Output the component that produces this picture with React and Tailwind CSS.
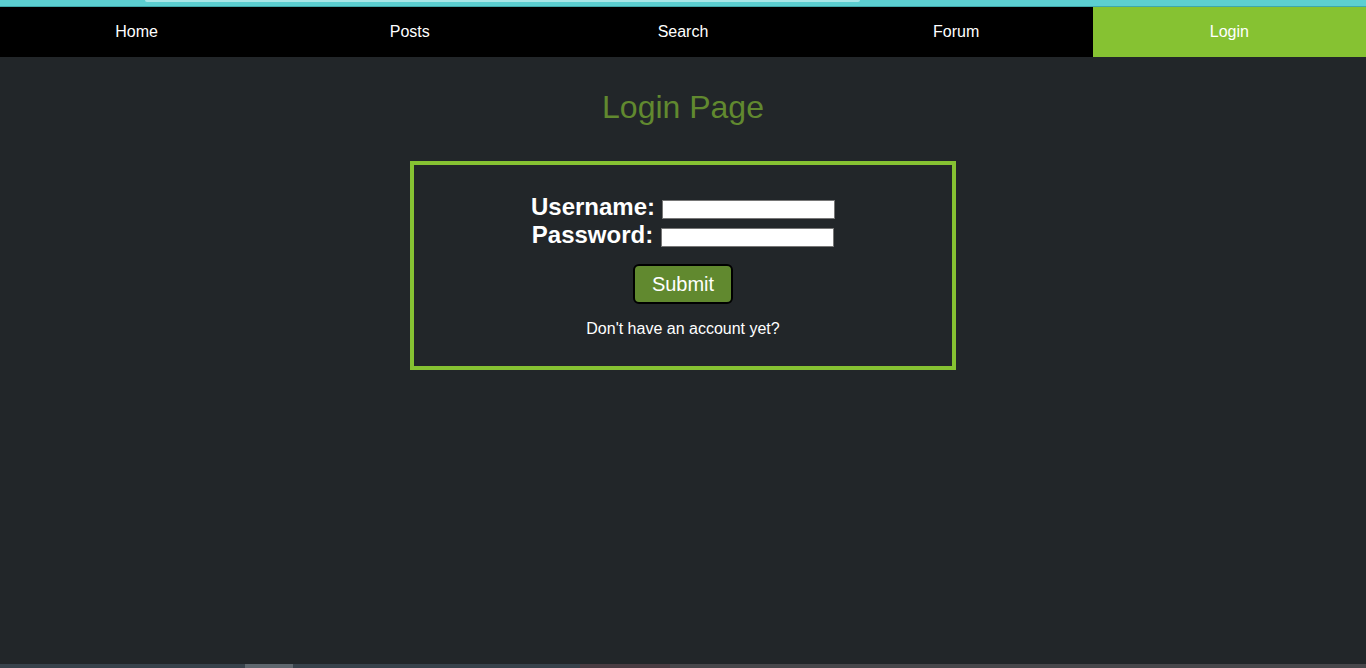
import React from "react";

const navItems = ["Home", "Posts", "Search", "Forum", "Login"];

export default function App() {
  return (
    <div
      className="w-[1366px] h-[668px] flex flex-col bg-[#222629] overflow-hidden"
      style={{ fontFamily: '"Liberation Sans", Arial, sans-serif' }}
    >
      {/* top browser strip */}
      <div className="h-[7px] bg-[#5ccfd1] flex flex-col shrink-0">
        <div className="h-[6px] flex">
          <div className="w-[145px]" />
          <div className="w-[715px] h-[2px] bg-[#a9e6e8] rounded-b-sm" />
        </div>
        <div className="h-[1px] bg-[#3fa8ab]" />
      </div>

      {/* nav */}
      <nav className="h-[50px] grid grid-cols-5 bg-black shrink-0">
        {navItems.map((item) => (
          <a
            key={item}
            className={`flex items-center justify-center text-white text-[16px] ${
              item === "Login" ? "bg-[#86c232]" : ""
            }`}
          >
            {item}
          </a>
        ))}
      </nav>

      {/* main */}
      <main className="flex-1 flex flex-col items-center">
        <h1 className="text-[32px] leading-[36px] text-[#61892f] mt-[32px]">
          Login Page
        </h1>
        <div className="mt-[36px] w-[546px] h-[209px] border-4 border-[#86c232] flex flex-col items-center pt-[28px]">
          <div className="flex items-center h-[28px]">
            <span className="text-white font-bold text-[24px] leading-[28px]">
              Username:
            </span>
            <div className="ml-[7px] mt-[4px] w-[173px] h-[19px] bg-white border border-[#767676]" />
          </div>
          <div className="flex items-center h-[28px]">
            <span className="text-white font-bold text-[24px] leading-[28px]">
              Password:
            </span>
            <div className="ml-[8px] mt-[4px] w-[173px] h-[19px] bg-white border border-[#767676]" />
          </div>
          <button className="mt-[15px] w-[100px] h-[40px] bg-[#61892f] border-2 border-black rounded-[6px] text-white text-[20px] leading-none">
            Submit
          </button>
          <p className="mt-[16px] text-white text-[16px] leading-[18px]">
            Don't have an account yet?
          </p>
        </div>
      </main>

      {/* bottom strip */}
      <div className="h-[4px] flex shrink-0">
        <div className="w-[245px] bg-[#38424b]" />
        <div className="w-[48px] bg-[#5f676e]" />
        <div className="w-[287px] bg-[#38424b]" />
        <div className="w-[90px] bg-[#4a3c42]" />
        <div className="flex-1 bg-[#48474b]" />
      </div>
    </div>
  );
}
